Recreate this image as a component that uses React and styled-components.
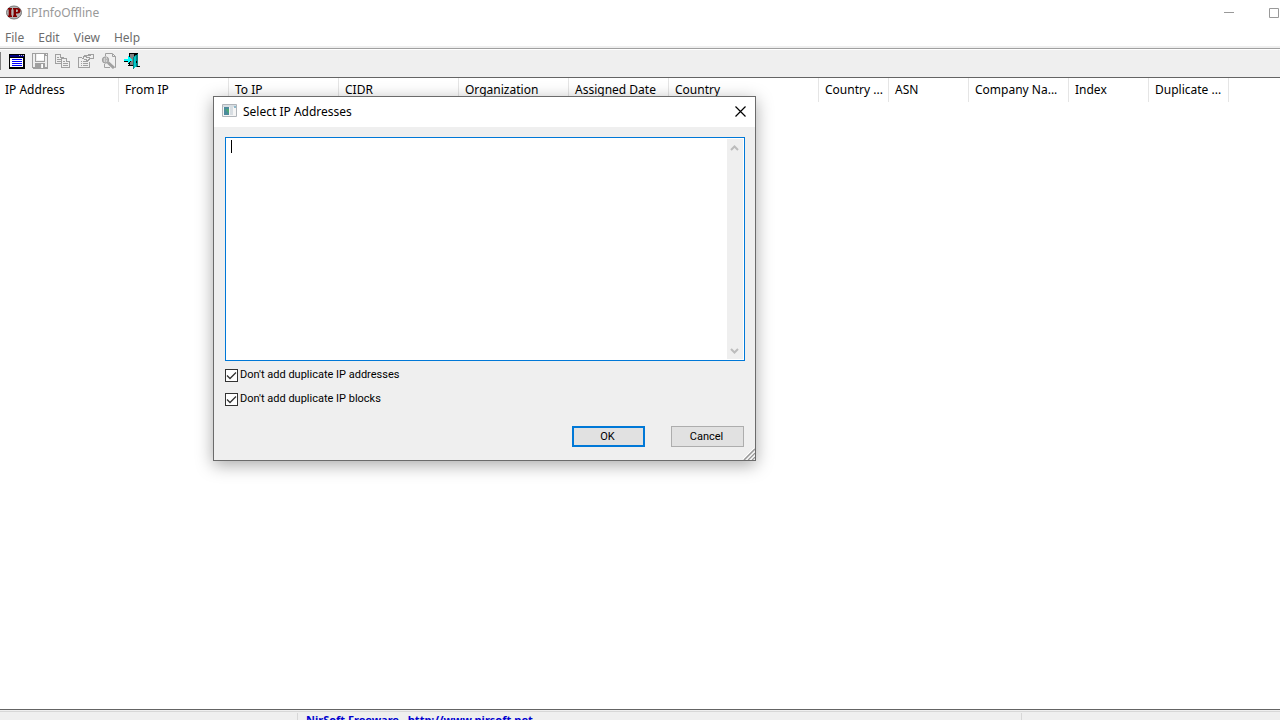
import { useState } from 'react';
import styled, { createGlobalStyle } from 'styled-components';

const GlobalStyle = createGlobalStyle`
    * {
        box-sizing: border-box;
    }

    body {
        margin: 0;
        background: #fff;
        font-family: 'Noto Sans', 'Open Sans', sans-serif;
        font-size: 12px;
        color: #000;
    }
`;

const Window = styled.div`
    position: relative;
    display: flex;
    flex-direction: column;
    height: 100vh;
    overflow: hidden;
`;

const TitleBar = styled.header`
    display: flex;
    align-items: center;
    flex: none;
    height: 26px;
    padding-left: 6px;
    gap: 5px;
    overflow: hidden;
    color: #999;
`;

const AppTitle = styled.h1`
    flex: 1;
    margin: 0;
    font-size: 12px;
    font-weight: 400;
    line-height: 16px;
`;

const WindowButton = styled.button`
    display: flex;
    flex: none;
    align-items: center;
    justify-content: center;
    width: ${({ $width }) => $width}px;
    height: 26px;
    padding: 0;
    border: 0;
    background: none;
    color: ${({ $color }) => $color || '#999'};
`;

const WindowControls = styled.div`
    display: flex;
    flex: none;
    margin-right: -16px;
`;

const MenuBar = styled.nav`
    display: flex;
    flex: none;
    height: 20px;
    gap: 14px;
    padding-left: 5px;
`;

const MenuItem = styled.button`
    padding: 0;
    border: 0;
    background: none;
    color: #6d6d6d;
    font: inherit;
    line-height: 24px;
`;

const ToolBar = styled.div`
    display: flex;
    flex: none;
    align-items: center;
    gap: 7px;
    height: 32px;
    padding-bottom: 3px;
    border-top: 2px solid #efefef;
    border-bottom: 1px solid #646464;
    background: linear-gradient(#a0a0a0 1px, #fff 1px, #fff 2px, #efefef 2px);
`;

const ToolBarEdge = styled.span`
    width: 2px;
    height: 18px;
    border-left: 1px solid #808080;
`;

const ToolButton = styled.button`
    display: flex;
    width: 16px;
    height: 16px;
    padding: 0;
    border: 0;
    background: none;
`;

const Main = styled.main`
    flex: 1;
    min-height: 0;
    overflow: hidden;
`;

const Table = styled.table`
    table-layout: fixed;
    width: 1229px;
    border-collapse: separate;
    border-spacing: 0;
`;

const HeaderCell = styled.th`
    width: ${({ $width }) => $width}px;
    height: 24px;
    padding: 0 5px 0 ${({ $first }) => ($first ? 5 : 6)}px;
    overflow: hidden;
    border-right: 1px solid #e5e5e5;
    font-weight: 400;
    line-height: 24px;
    text-align: left;
    white-space: nowrap;
`;

const StatusBar = styled.footer`
    display: flex;
    flex: none;
    height: 11px;
    overflow: hidden;
    border-top: 1px solid #646464;
    background: linear-gradient(#efefef 1px, #d7d7d7 1px, #d7d7d7 2px, #efefef 2px);
`;

const StatusPart = styled.div`
    flex: ${({ $width }) => ($width ? `0 0 ${$width}px` : '1')};
    height: 20px;
    margin-top: 3px;
    padding-left: 8px;
    border-right: ${({ $last }) => ($last ? '0' : '1px solid #d7d7d7')};
`;

const StatusLink = styled.a`
    display: block;
    color: #0000d0;
    font-size: 11px;
    font-weight: 700;
    line-height: 14px;
    text-decoration: none;
    white-space: pre;
`;

const Dialog = styled.form`
    position: absolute;
    top: 96px;
    left: 213px;
    display: flex;
    flex-direction: column;
    width: 543px;
    border: 1px solid #6b6b6b;
    background: #efefef;
    box-shadow: 0 4px 16px rgba(0, 0, 0, 0.34);
    font-family: Roboto, 'Noto Sans', sans-serif;
    font-size: 11px;
`;

const DialogTitleBar = styled.div`
    display: flex;
    align-items: center;
    height: 30px;
    padding: 0 0 2px 8px;
    gap: 5px;
    background: #fff;
`;

const DialogTitle = styled.h2`
    flex: 1;
    margin: 0;
    font-family: 'Noto Sans', 'Open Sans', sans-serif;
    font-size: 12px;
    font-weight: 400;
`;

const DialogBody = styled.div`
    display: flex;
    flex-direction: column;
    padding: 10px 10px 13px 11px;
`;

const Field = styled.div`
    position: relative;
    display: flex;
    height: 224px;
    margin-bottom: 2px;
    padding: 1px;
    border: 1px solid #0078d7;
    background: #fff;
`;

const TextArea = styled.textarea`
    flex: 1;
    padding: 1px 4px;
    border: 0;
    outline: 0;
    resize: none;
    overflow: hidden;
    background: #fff;
    caret-color: transparent;
    font: inherit;
`;

const Caret = styled.span`
    position: absolute;
    top: 2px;
    left: 5px;
    width: 1px;
    height: 13px;
    background: #000;
`;

const ScrollBar = styled.div`
    display: flex;
    flex-direction: column;
    justify-content: space-between;
    align-items: center;
    width: 16px;
    padding: 5px 2px 4px 0;
    background: #efefef;
`;

const CheckLabel = styled.label`
    display: flex;
    align-items: center;
    gap: 2px;
    height: 24px;
    line-height: 14px;
`;

const CheckBox = styled.input`
    flex: none;
    width: 13px;
    height: 13px;
    margin: 0;
    appearance: none;
    border: 1px solid #333;
    background: #fff;

    &:checked {
        background: #fff
            url("data:image/svg+xml,%3Csvg xmlns='http://www.w3.org/2000/svg' viewBox='0 0 11 11'%3E%3Cpath d='M1 5.5l3 3L10 2.5' fill='none' stroke='%23333' stroke-width='1.3'/%3E%3C/svg%3E")
            center / 11px 11px no-repeat;
    }
`;

const ButtonRow = styled.div`
    display: flex;
    justify-content: flex-end;
    gap: 26px;
    margin-top: 15px;
    padding-right: 1px;
`;

const Button = styled.button`
    width: 73px;
    height: 21px;
    padding: 1px 2px 0 0;
    border: ${({ $primary }) => ($primary ? '2px solid #0078d7' : '1px solid #adadad')};
    background: #e1e1e1;
    color: #000;
    font: inherit;
    line-height: 16px;
`;

const Grip = styled.svg`
    position: absolute;
    right: 0;
    bottom: 0;
`;

const columns = [
    ['IP Address', 119],
    ['From IP', 110],
    ['To IP', 110],
    ['CIDR', 120],
    ['Organization', 110],
    ['Assigned Date', 100],
    ['Country', 150],
    ['Country ...', 70],
    ['ASN', 80],
    ['Company Na...', 100],
    ['Index', 80],
    ['Duplicate ...', 80],
];

function AppIcon() {
    return (
        <svg width="16" height="16" viewBox="0 0 16 16" aria-hidden="true">
            <ellipse cx="8" cy="7.500" rx="7.500" ry="6.500" fill="#b5b5b5" stroke="#777" />
            <path fill="#800000" d="M2 3h4v1.500H5.300v6H6V12H2v-1.500h.7v-6H2zM7 3h4.500q3 0 3 2.800T11.500 8.500H10v2h1V12H7v-1.500h.6v-6H7zM10 4.500V7h.8q1.200 0 1.200-1.300T10.800 4.500z" />
        </svg>
    );
}

function ListIcon() {
    return (
        <svg width="16" height="16" viewBox="0 0 16 16" shapeRendering="crispEdges">
            <path fill="#000" d="M0 1h16v15H0z" />
            <path fill="#fff" d="M1 5h13v9H1z" />
            <path fill="#000080" d="M1 2h14v2H1z" />
            <path fill="#c0c0c0" d="M10 2h1v1h-1zM12 2h1v1h-1zM14 2h1v1h-1z" />
            <path stroke="#0000ff" d="M3 6.500h10M3 8.500h10M3 10.500h10M3 12.500h10" />
        </svg>
    );
}

function SaveIcon() {
    return (
        <svg width="16" height="16" viewBox="0 0 16 16" shapeRendering="crispEdges">
            <path fill="#a0a0a0" d="M0 0h16v16H1l-1-1z" />
            <path fill="#efefef" d="M1 1h2v13H1zM4 1h8v7H4zM13 3h2v11h-2zM14 1h1v1h-1zM3 9h10v1H3zM9 11h2v4H9z" />
            <path fill="#fff" d="M5 1h7v6H5zM10 11h1v4h-1z" />
        </svg>
    );
}

function CopyIcon() {
    return (
        <svg width="16" height="16" viewBox="0 0 16 16" shapeRendering="crispEdges">
            <g fill="#efefef" stroke="#a0a0a0">
                <path d="M.5 1.500h5l3 3v6h-8z" />
                <path d="M5.500 1.500v3h3M2 4.500h2M2 6.500h4M2 8.500h4" />
                <path d="M6.500 5.500h5l3 3v6h-8z" />
                <path d="M11.500 5.500v3h3M8 8.500h2M8 10.500h5M8 12.500h5" />
            </g>
        </svg>
    );
}

function PropertiesIcon() {
    return (
        <svg width="16" height="16" viewBox="0 0 16 16" shapeRendering="crispEdges">
            <g fill="none" stroke="#a0a0a0">
                <path d="M4 4.500H.5v10h11V9M3 8.500h1M5 8.500h5M3 10.500h1M5 10.500h5M3 12.500h1M5 12.500h5" />
                <path d="M4 5.500h1v-1l2-2h3l1-1h4v4h-3l-2 2H8v-1H6M6 3.500h3M8 4.500h4M11 2.500h2" />
            </g>
        </svg>
    );
}

function FindIcon() {
    return (
        <svg width="16" height="16" viewBox="0 0 16 16">
            <g fill="none" stroke="#a0a0a0">
                <path d="M4.500 3V.5h7l3 3v11h-1M11.500 1v2.500h3M3.500 11v3.500H9" />
                <circle cx="4.500" cy="7" r="3.200" fill="#b5b5b5" />
                <path d="M7 9.500l6 5.500" strokeWidth="3" />
                <path d="M3 6h1M5 8h1M5 5h1M3 8h1" stroke="#efefef" />
            </g>
        </svg>
    );
}

function ExitIcon() {
    return (
        <svg width="16" height="16" viewBox="0 0 16 16" shapeRendering="crispEdges">
            <path fill="#000" d="M5 0h9v13h2v1h-3v-1H4v-1h1z" />
            <path fill="#808080" d="M6 1h4v11H6z" />
            <path fill="#008080" d="M9 4l5-3v12l-5 3z" />
            <path fill="#00c8c8" d="M10 4l2-1v11l-2 1z" />
            <path fill="#00ffff" d="M0 6h4V3l4 4-4 4V8H0z" />
            <path fill="#000" d="M0 8h4v1H0zM4 10h1v1H4zM5 9h1v1H5zM6 8h1v1H6zM12 8h1v2h-1z" />
        </svg>
    );
}

function DialogIcon() {
    return (
        <svg width="16" height="16" viewBox="0 0 16 16" aria-hidden="true">
            <path fill="#f5f5f5" stroke="#b0b5ba" d="M.5 1.500h14v12H.5z" />
            <path fill="#d7dde2" d="M1 2h13v2H1zM8 4h3v8H8z" />
            <path fill="#4c8a9c" d="M2 4h5v8H2z" />
            <path fill="#4ba578" d="M3 6h4v5z" />
            <path fill="#8eb9cb" d="M12 3h2v2h-2z" />
        </svg>
    );
}

function Chevron({ down }) {
    return (
        <svg width="9" height="8" viewBox="0 0 9 8" aria-hidden="true">
            <path d={down ? 'M1 2l3.500 3.500L8 2' : 'M1 6l3.500-3.500L8 6'} fill="none" stroke="#bcbcbc" strokeWidth="2" />
        </svg>
    );
}

const tools = [
    ['Select IP Addresses', ListIcon],
    ['Save', SaveIcon],
    ['Copy', CopyIcon],
    ['Properties', PropertiesIcon],
    ['Find', FindIcon],
    ['Exit', ExitIcon],
];

function SelectDialog() {
    const [text, setText] = useState('');

    return (
        <Dialog role="dialog" aria-labelledby="dialog-title" onSubmit={(e) => e.preventDefault()}>
            <DialogTitleBar>
                <DialogIcon />
                <DialogTitle id="dialog-title">Select IP Addresses</DialogTitle>
                <WindowButton type="button" $width={29} $color="#000" aria-label="Close">
                    <svg width="11" height="11" viewBox="0 0 11 11">
                        <path d="M.5.5l10 10M10.500.5l-10 10" stroke="currentColor" strokeWidth="1.200" />
                    </svg>
                </WindowButton>
            </DialogTitleBar>
            <DialogBody>
                <Field>
                    <TextArea aria-label="IP addresses" value={text} onChange={(e) => setText(e.target.value)} />
                    {!text && <Caret />}
                    <ScrollBar>
                        <Chevron />
                        <Chevron down />
                    </ScrollBar>
                </Field>
                <CheckLabel>
                    <CheckBox type="checkbox" defaultChecked />
                    Don't add duplicate IP addresses
                </CheckLabel>
                <CheckLabel>
                    <CheckBox type="checkbox" defaultChecked />
                    Don't add duplicate IP blocks
                </CheckLabel>
                <ButtonRow>
                    <Button type="submit" $primary>OK</Button>
                    <Button type="button">Cancel</Button>
                </ButtonRow>
            </DialogBody>
            <Grip width="12" height="12" viewBox="0 0 12 12" aria-hidden="true">
                <path d="M1 12L12 1M5 12l7-7M9 12l3-3" stroke="#999" strokeWidth="1.500" />
                <path d="M0 11L11 0M3.500 12L12 3.500M7.500 12L12 7.500" stroke="#fff" />
            </Grip>
        </Dialog>
    );
}

export default function App() {
    return (
        <Window>
            <GlobalStyle />
            <TitleBar>
                <AppIcon />
                <AppTitle>IPInfoOffline</AppTitle>
                <WindowControls>
                    <WindowButton $width={46} aria-label="Minimize">
                        <svg width="10" height="10" viewBox="0 0 10 10">
                            <path d="M0 4.500h10" stroke="currentColor" />
                        </svg>
                    </WindowButton>
                    <WindowButton $width={44} aria-label="Maximize">
                        <svg width="10" height="10" viewBox="0 0 10 10">
                            <path d="M.5.5h9v9h-9z" fill="none" stroke="currentColor" />
                        </svg>
                    </WindowButton>
                </WindowControls>
            </TitleBar>
            <MenuBar>
                {['File', 'Edit', 'View', 'Help'].map((name) => (
                    <MenuItem key={name}>{name}</MenuItem>
                ))}
            </MenuBar>
            <ToolBar>
                <ToolBarEdge />
                {tools.map(([name, Icon]) => (
                    <ToolButton key={name} aria-label={name}>
                        <Icon />
                    </ToolButton>
                ))}
            </ToolBar>
            <Main>
                <Table>
                    <thead>
                        <tr>
                            {columns.map(([name, width], i) => (
                                <HeaderCell key={name} $width={width} $first={i === 0}>{name}</HeaderCell>
                            ))}
                        </tr>
                    </thead>
                </Table>
            </Main>
            <StatusBar>
                <StatusPart $width={298} />
                <StatusPart $width={724}>
                    <StatusLink href="http://www.nirsoft.net">NirSoft Freeware.  http://www.nirsoft.net</StatusLink>
                </StatusPart>
                <StatusPart $last />
            </StatusBar>
            <SelectDialog />
        </Window>
    );
}
